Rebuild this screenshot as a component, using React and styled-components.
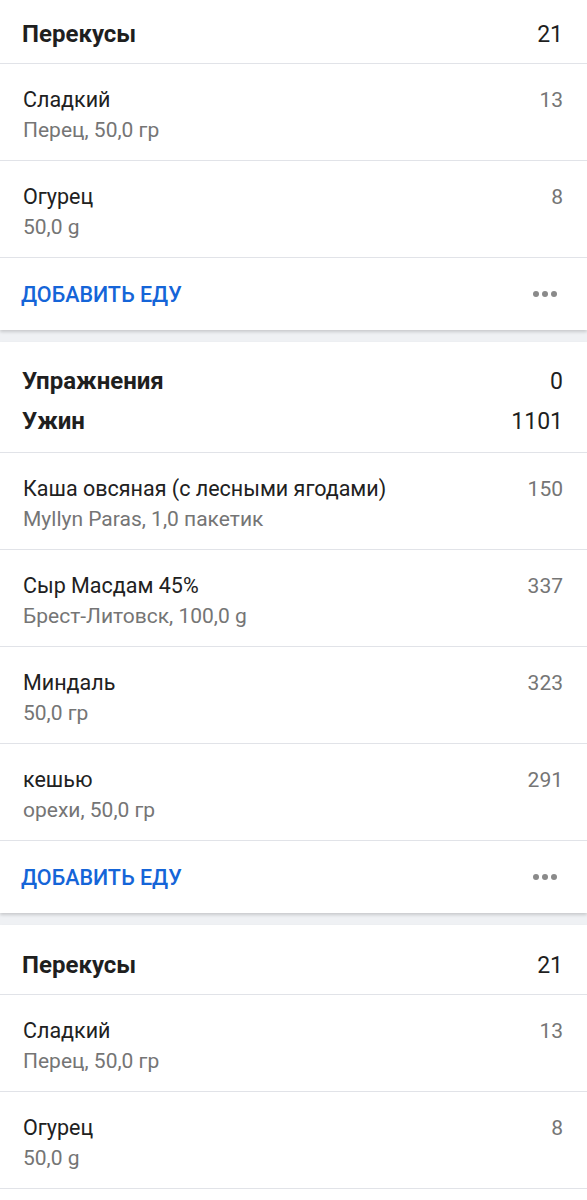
import styled, { createGlobalStyle } from 'styled-components';

const GlobalStyle = createGlobalStyle`
    html, body {
        margin: 0;
        padding: 0;
        background: #eff1f4;
    }
    body {
        font-family: Roboto, "Noto Sans", sans-serif;
        -webkit-font-smoothing: antialiased;
    }
`;

const Page = styled.div`
    display: flex;
    flex-direction: column;
    gap: 12px;
    margin-top: -5px; /* список прокручен чуть вверх */
    height: 1205px;
    overflow: hidden;
`;

const Card = styled.section`
    flex: ${(p) => (p.$fill ? '1 0 auto' : '0 0 auto')};
    background: #fff;
    box-shadow: 0 2px 3px rgba(0, 0, 0, 0.16);
`;

const Header = styled.div`
    display: flex;
    flex-direction: column;
    gap: 12px;
    padding: ${(p) => (p.$top || 25)}px 24px ${(p) => (p.$bottom || 15)}px 22px;
    border-bottom: 1px solid #e1e3e8;
`;

const HeaderLine = styled.div`
    display: flex;
    justify-content: space-between;
    align-items: center;
    height: 28px;
`;

const HeaderTitle = styled.span`
    font-size: 24px;
    font-weight: 700;
    color: #1f1f1f;
`;

const HeaderValue = styled.span`
    font-size: 23px;
    color: #1f1f1f;
`;

const Row = styled.div`
    display: flex;
    justify-content: space-between;
    align-items: flex-start;
    padding: 22px 24px 16px 23px;
    border-bottom: 1px solid #e1e3e8;
`;

const RowText = styled.div`
    display: flex;
    flex-direction: column;
    gap: 2px;
`;

const Title = styled.span`
    font-size: 21.5px;
    line-height: 28px;
    color: #212121;
`;

const Subtitle = styled.span`
    font-size: 21px;
    line-height: 28px;
    color: #757575;
`;

const Calories = styled.span`
    font-size: 21px;
    line-height: 28px;
    color: #757575;
`;

const Footer = styled.div`
    display: flex;
    justify-content: space-between;
    align-items: center;
    height: 72px;
    padding: 0 30px 0 21px;
`;

const AddButton = styled.button`
    border: none;
    background: none;
    padding: 0;
    font-family: inherit;
    font-size: 21.5px;
    font-weight: 500;
    color: #1565d8;
    cursor: pointer;
`;

const More = styled.div`
    display: flex;
    gap: 3px;
`;

const Dot = styled.span`
    width: 6px;
    height: 6px;
    border-radius: 50%;
    background: #8a8a8a;
`;

function FoodRow({ title, subtitle, kcal }) {
    return (
        <Row>
            <RowText>
                <Title>{title}</Title>
                <Subtitle>{subtitle}</Subtitle>
            </RowText>
            <Calories>{kcal}</Calories>
        </Row>
    );
}

function MealFooter() {
    return (
        <Footer>
            <AddButton>ДОБАВИТЬ ЕДУ</AddButton>
            <More><Dot /><Dot /><Dot /></More>
        </Footer>
    );
}

const snacks = [
    { title: 'Сладкий', subtitle: 'Перец, 50,0 гр', kcal: 13 },
    { title: 'Огурец', subtitle: '50,0 g', kcal: 8 },
];

const dinner = [
    { title: 'Каша овсяная (с лесными ягодами)', subtitle: 'Myllyn Paras, 1,0 пакетик', kcal: 150 },
    { title: 'Сыр Масдам 45%', subtitle: 'Брест-Литовск, 100,0 g', kcal: 337 },
    { title: 'Миндаль', subtitle: '50,0 гр', kcal: 323 },
    { title: 'кешью', subtitle: 'орехи, 50,0 гр', kcal: 291 },
];

export default function App() {
    return (
        <Page>
            <GlobalStyle />
            <Card>
                <Header>
                    <HeaderLine>
                        <HeaderTitle>Перекусы</HeaderTitle>
                        <HeaderValue>21</HeaderValue>
                    </HeaderLine>
                </Header>
                {snacks.map((f) => <FoodRow key={f.title} {...f} />)}
                <MealFooter />
            </Card>
            <Card>
                <Header $bottom={17}>
                    <HeaderLine>
                        <HeaderTitle>Упражнения</HeaderTitle>
                        <HeaderValue>0</HeaderValue>
                    </HeaderLine>
                    <HeaderLine>
                        <HeaderTitle>Ужин</HeaderTitle>
                        <HeaderValue>1101</HeaderValue>
                    </HeaderLine>
                </Header>
                {dinner.map((f) => <FoodRow key={f.title} {...f} />)}
                <MealFooter />
            </Card>
            <Card $fill>
                <Header $top={26}>
                    <HeaderLine>
                        <HeaderTitle>Перекусы</HeaderTitle>
                        <HeaderValue>21</HeaderValue>
                    </HeaderLine>
                </Header>
                {snacks.map((f) => <FoodRow key={f.title} {...f} />)}
            </Card>
        </Page>
    );
}
